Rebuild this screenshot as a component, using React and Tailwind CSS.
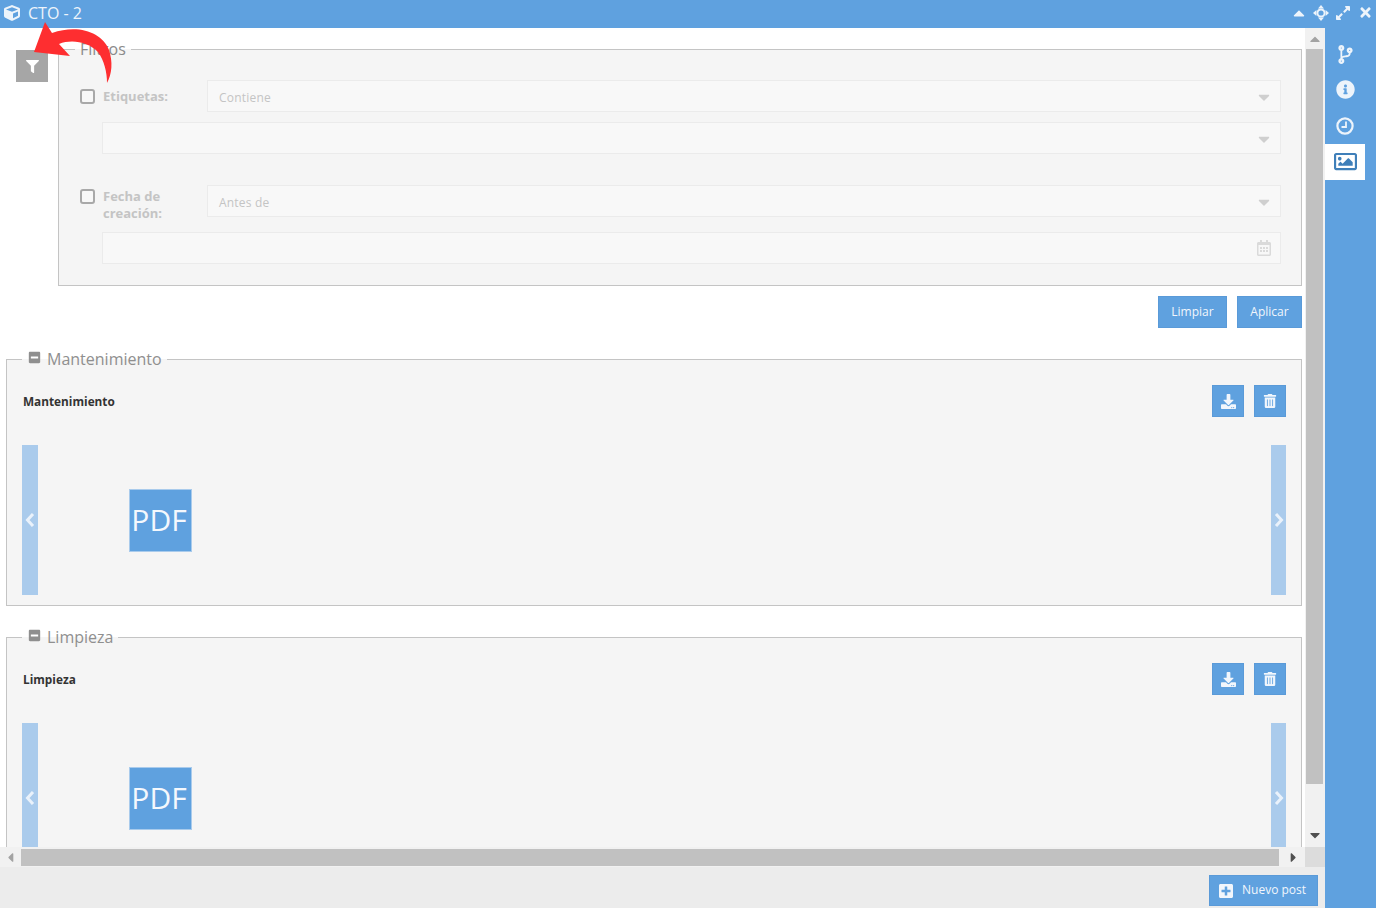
import {
  FaCube, FaFilter, FaCaretUp, FaCaretDown, FaCaretLeft, FaCaretRight, FaExpandAlt, FaTimes,
  FaCodeBranch, FaInfoCircle, FaRegImage, FaDownload, FaTrashAlt, FaPlusSquare, FaMinusSquare,
  FaRegCalendarAlt,
} from 'react-icons/fa';

function SelectBox({ text, className = '', icon }) {
  return (
    <div className={`flex h-8 items-center justify-between border border-[#ebebeb] bg-[#f8f8f8] pl-[11px] pr-[7px] text-xs tracking-[0.2px] text-[#c4c4c4] ${className}`}>
      <span className="mt-[4px]">{text}</span>
      {icon || <FaCaretDown className="mt-[2px] text-[#cfcfcf]" size={18} />}
    </div>
  );
}

function FilterCheck({ className = '' }) {
  return <span className={`block h-[15px] w-[15px] shrink-0 rounded-[3px] border-2 border-[#a9a9a9] bg-[#f8f8f8] ${className}`} />;
}

function MoveIcon() {
  return (
    <svg width="16" height="16" viewBox="0 0 16 16" fill="currentColor">
      <circle cx="8" cy="8" r="3.6" fill="none" stroke="currentColor" strokeWidth="2" />
      <path d="M8 0 L11 3.4 H5 Z M8 16 L11 12.6 H5 Z M0 8 L3.4 5 V11 Z M16 8 L12.6 5 V11 Z" />
    </svg>
  );
}

function ClockIcon() {
  return (
    <svg width="18" height="18" viewBox="0 0 18 18" fill="none" stroke="currentColor">
      <circle cx="9" cy="9" r="7.6" strokeWidth="2.2" />
      <path d="M10 4.5 V10 H5.5" strokeWidth="1.8" />
    </svg>
  );
}

// Carousel arrow, heavier than the icon package's chevrons
function Chevron({ points }) {
  return (
    <svg width="10" height="14" viewBox="0 0 10 14" fill="none" stroke="currentColor" strokeWidth="3">
      <path d={points} />
    </svg>
  );
}

function Filters() {
  return (
    <div className="flex pl-4 pr-[3px] pt-[10px]">
      <button className="mt-3 flex h-8 w-8 shrink-0 items-center justify-center bg-[#a6a6a6] pt-px text-white">
        <FaFilter size={13} />
      </button>
      <div className="ml-[10px] flex-1">
        <fieldset className="h-[248px] border border-[#c4c4c4] bg-[#f5f5f5] pl-[21px] pr-5">
          <legend className="ml-[-5px] h-[22px] px-[5px] text-base leading-[22px] text-[#8a8a8a]">Filtros</legend>
          <div className="mt-5 flex items-center">
            <FilterCheck />
            <span className="ml-2 mt-[2px] w-[104px] text-[13px] font-bold text-[#c4c4c4]">Etiquetas:</span>
            <SelectBox text="Contiene" className="flex-1" />
          </div>
          <SelectBox className="ml-[22px] mt-[10px]" />
          <div className="mt-[31px] flex items-start">
            <FilterCheck className="mt-[4px]" />
            <span className="ml-2 mt-[3px] w-[104px] text-[13px] font-bold leading-[17px] text-[#c4c4c4]">Fecha de creación:</span>
            <SelectBox text="Antes de" className="flex-1" />
          </div>
          <SelectBox className="ml-[22px] mt-[10px]" icon={<FaRegCalendarAlt className="mr-px text-[#dadada]" size={16} />} />
        </fieldset>
        <div className="mt-[10px] flex justify-end gap-[10px]">
          <button className="h-8 w-[69px] border border-[#5a9ad8] bg-[#5fa1df] text-xs text-[#f1f6fc]">Limpiar</button>
          <button className="h-8 w-[65px] border border-[#5a9ad8] bg-[#5fa1df] text-xs text-[#f1f6fc]">Aplicar</button>
        </div>
      </div>
    </div>
  );
}

function Section({ title }) {
  return (
    <fieldset className="ml-[6px] mr-[3px] mt-5 h-[258px] shrink-0 border border-[#c4c4c4] bg-[#f5f5f5] px-[15px]">
      <legend className="flex h-[22px] items-center px-[5px] text-base leading-[22px] text-[#8f8f8f]">
        <FaMinusSquare className="ml-px mr-[6px] mt-[-4px] text-[#8f8f8f]" size={13} />
        {title}
      </legend>
      <div className="mt-[15px] flex h-8 items-center justify-between">
        <span className="ml-px mt-[2px] text-[11.8px] font-bold text-[#333]">{title}</span>
        <div className="flex gap-[10px]">
          <button className="flex h-8 w-8 items-center justify-center border border-[#5a9ad8] bg-[#5fa1df] text-[#f1f6fc]">
            <FaDownload size={15} />
          </button>
          <button className="flex h-8 w-8 items-center justify-center border border-[#5a9ad8] bg-[#5fa1df] text-[#f1f6fc]">
            <FaTrashAlt size={14} />
          </button>
        </div>
      </div>
      <div className="mt-[28px] flex h-[150px] items-center justify-between">
        <div className="flex h-full w-4 items-center justify-center bg-[#aacbec] text-[#eaf2fb]">
          <Chevron points="M8 1 L2.5 7 L8 13" />
        </div>
        <div className="ml-[91px] flex h-[63px] w-[63px] items-center justify-center border border-[#a9cbec] bg-[#5fa1df] pb-[2px] text-[30px] text-[#f4f8fd]">
          <span className="ml-[-3px]">PDF</span>
        </div>
        <div className="flex-1" />
        <div className="flex h-full w-[15px] items-center justify-center bg-[#aacbec] text-[#eaf2fb]">
          <Chevron points="M2 1 L7.5 7 L2 13" />
        </div>
      </div>
    </fieldset>
  );
}

function RedArrow() {
  return (
    <svg className="absolute left-0 top-0" width="120" height="90" viewBox="0 0 120 90">
      <path
        d="M45 22 L34 52 L70 56 L59 44 C72 39 88 42 98 52 C104 60 107 72 107 83 C112 74 113 62 109 50 C102 32 78 24 52 33 Z"
        fill="#fe2e30"
      />
    </svg>
  );
}

export default function App() {
  return (
    <div className="relative flex h-[908px] w-[1376px] flex-col overflow-hidden bg-white font-['Open_Sans',sans-serif]">
      {/* Title bar */}
      <div className="flex h-7 shrink-0 items-center justify-between bg-[#5fa1df] pb-[3px] pl-1 text-[#edf4fb]">
        <div className="flex items-center">
          <FaCube size={16} />
          <span className="ml-2 text-base">CTO - 2</span>
        </div>
        <div className="flex items-center">
          <span className="flex w-[22px] justify-center"><FaCaretUp size={18} /></span>
          <span className="flex w-[22px] justify-center"><MoveIcon /></span>
          <span className="flex w-[22px] justify-center"><FaExpandAlt size={16} /></span>
          <span className="flex w-[22px] justify-center"><FaTimes size={15} /></span>
        </div>
      </div>

      <div className="flex min-h-0 flex-1">
        <div className="flex min-w-0 flex-1 flex-col">
          <div className="flex min-h-0 flex-1">
            {/* Scrollable content */}
            <div className="min-w-0 flex-1 overflow-hidden">
              <Filters />
              <Section title="Mantenimiento" />
              <Section title="Limpieza" />
            </div>
            {/* Vertical scrollbar */}
            <div className="flex w-5 shrink-0 flex-col items-center bg-[#f1f1f1]">
              <FaCaretUp className="mt-[3px] text-[#a3a3a3]" size={16} />
              <div className="ml-[-1px] mt-[2px] h-[735px] w-[17px] bg-[#c1c1c1]" />
              <FaCaretDown className="mt-[43px] text-[#505050]" size={16} />
            </div>
          </div>
          {/* Horizontal scrollbar */}
          <div className="flex h-5 shrink-0 items-center bg-[#f1f1f1]">
            <div className="flex w-[21px] justify-center"><FaCaretLeft className="text-[#a3a3a3]" size={15} /></div>
            <div className="mt-px h-[17px] w-[1258px] bg-[#c1c1c1]" />
            <div className="flex w-[26px] justify-center pl-[2px]"><FaCaretRight className="text-[#505050]" size={15} /></div>
            <div className="h-full w-5 bg-[#dcdcdc]" />
          </div>
          {/* Footer */}
          <div className="flex h-[41px] shrink-0 items-start justify-end bg-[#ececec] pr-[7px] pt-2">
            <button className="flex h-[31px] w-[109px] items-center border border-[#5a9ad8] bg-[#5fa1df] pl-2 text-xs text-[#f1f6fc]">
              <FaPlusSquare size={16} />
              <span className="mb-[2px] ml-2">Nuevo post</span>
            </button>
          </div>
        </div>

        {/* Right sidebar */}
        <div className="flex w-[51px] shrink-0 flex-col bg-[#5fa1df] pt-2 text-[#edf4fb]">
          <div className="flex h-9 w-10 items-center justify-center"><FaCodeBranch size={19} /></div>
          <div className="flex h-9 w-10 items-center justify-center pb-[2px]"><FaInfoCircle size={19} /></div>
          <div className="flex h-9 w-10 items-center justify-center"><ClockIcon /></div>
          <div className="flex h-9 w-10 items-center justify-center bg-white pb-[2px] pl-px text-[#3f7fb9]"><FaRegImage size={23} /></div>
        </div>
      </div>

      <RedArrow />
    </div>
  );
}
